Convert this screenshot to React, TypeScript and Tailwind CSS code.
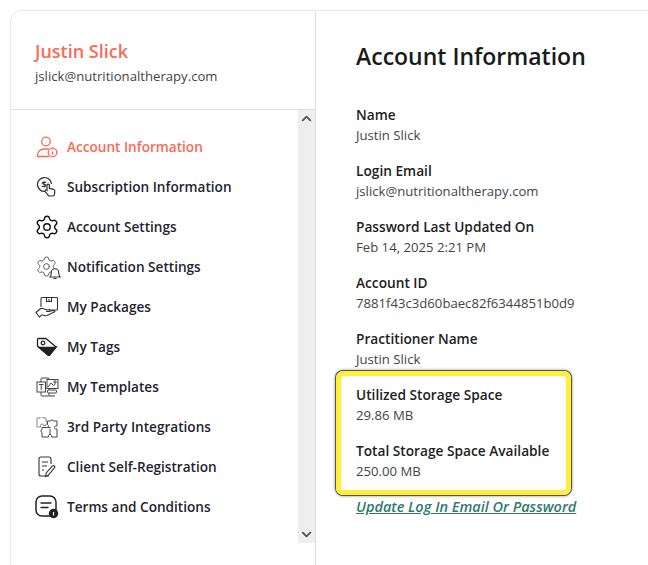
import { ReactNode } from 'react';
import { ChevronDown, ChevronUp, Settings } from 'lucide-react';

const font = { fontFamily: '"Open Sans", "Noto Sans", sans-serif' };

function AccountIcon() {
  return (
    <svg width="22" height="22" viewBox="0 0 22 22" fill="none" stroke="#fb6a55" strokeWidth="1.3">
      <circle cx="10" cy="5.5" r="4.3" />
      <path d="M1.5 20.5v-1.5c0-3.5 3-6 6.5-6h4" strokeLinecap="round" />
      <path d="M1.5 20.5h11" strokeLinecap="round" />
      <circle cx="16.5" cy="16.5" r="4.3" />
      <path d="M16.5 15.8v3M16.5 13.8v.8" strokeWidth="1.5" />
    </svg>
  );
}

function SubscriptionIcon() {
  return (
    <svg width="20" height="22" viewBox="0 0 20 22" fill="none" stroke="#2b2b2b" strokeWidth="1.2">
      <path d="M8 15.5a7 7 0 1 1 6.5-7.5" />
      <text x="4.6" y="11.5" fontSize="9" fontWeight="700" fill="#2b2b2b" stroke="none" fontFamily="Open Sans">$</text>
      <path d="M10 12V9.3a1.2 1.2 0 0 1 2.4 0v3l4 1c1 .3 1.5 1 1.4 2l-.4 3.5c-.1.8-.7 1.2-1.4 1.2h-3.4c-.6 0-1-.2-1.400-.7l-3-3.800c-.8-1.200.8-2.300 1.800-1.300z" fill="#fff" />
    </svg>
  );
}

function NotificationIcon() {
  return (
    <span className="relative block h-[24px] w-[24px]">
      <Settings size={23} strokeWidth={1} color="#555" />
      <svg className="absolute right-[-2px] bottom-[-1px]" width="12" height="14" viewBox="0 0 12 14" fill="#fff" stroke="#333" strokeWidth="1.1">
        <path d="M1 11c1-1 1.300-2 1.300-4.500a3.700 3.700 0 0 1 7.400 0c0 2.500.3 3.500 1.300 4.500z" />
        <path d="M4.500 12.500h3" />
      </svg>
    </span>
  );
}

function PackagesIcon() {
  return (
    <svg width="24" height="22" viewBox="0 0 24 22" fill="none" stroke="#333" strokeWidth="1.1">
      <path d="M6 11V2.500c0-.6.400-1 1-1h14.500c.6 0 1 .4 1 1V13c0 .6-.4 1-1 1H14" />
      <path d="M11.500 1.500v4h5v-4M13 4h2" />
      <path d="M1 16.500l4-3.500c1-.8 2-.8 3-.4l3 1.200h3.500c1 0 1 1.700 0 1.700H11l5-.5 3-.5c1 0 1.200 1 .4 1.400L12 19.500c-1 .3-2 .3-3-.1l-2-.6-2.500 2.200z" fill="#fff" />
    </svg>
  );
}

function TagsIcon() {
  return (
    <svg width="22" height="20" viewBox="0 0 22 20" fill="none" stroke="#222" strokeWidth="1.3">
      <path d="M2.500 1.500h7.500l10 8.500-6.500 8c-.5.500-1 .500-1.500 0L1.500 9V2.500c0-.6.400-1 1-1z" strokeLinejoin="round" />
      <path d="M3 10.500h15.500l1.500 -.500-6.500 8c-.5.500-1 .500-1.500 0z" fill="#222" />
      <circle cx="7" cy="6" r="1.800" />
    </svg>
  );
}

function TemplatesIcon() {
  return (
    <svg width="23" height="21" viewBox="0 0 23 21" fill="none" stroke="#444" strokeWidth="1">
      <rect x="5" y="1" width="8" height="18" rx="1" />
      <rect x="1" y="5" width="8.500" height="10" fill="#fff" />
      <path d="M3 7.500h4.500M5.200 7.500v5.500" />
      <rect x="11" y="2.500" width="11" height="9" fill="#fff" />
      <path d="M12 10l3-4 2.500 2.500 2-1.500" />
      <circle cx="19" cy="5" r="1.200" />
      <rect x="11.500" y="13" width="9" height="3" rx="1" fill="#fff" />
      <path d="M13 19h6" />
    </svg>
  );
}

function IntegrationsIcon() {
  return (
    <svg width="22" height="21" viewBox="0 0 22 21" fill="none" stroke="#444" strokeWidth="1">
      <path d="M1 1h3a1.500 1.500 0 0 1 3 0h3v3a1.500 1.500 0 0 1 0 3v1.500H7.500a1.500 1.500 0 0 0-3 0V10H1z" stroke="#888" />
      <path d="M11.500 4h3a1.600 1.600 0 0 1 3 0H21v5h-1.500a1.600 1.600 0 0 0 0 3H21v8h-5.500v-1.500a1.600 1.600 0 0 0-3 0V20H6v-4.500a1.600 1.600 0 0 1 0-3V10.500h4a1.600 1.600 0 0 0 1.500-3z" fill="#fff" />
      <path d="M11.500 10.500h3M14 12v6" />
    </svg>
  );
}

function SelfRegistrationIcon() {
  return (
    <svg width="18" height="22" viewBox="0 0 18 22" fill="none" stroke="#333" strokeWidth="1.1">
      <path d="M11 20H3c-1.200 0-2-.8-2-2V3c0-1.200.8-2 2-2h8c1.200 0 2 .8 2 2v5" />
      <path d="M4 6h6M4 10h5M4 14h2" />
      <path d="M7.500 20.500l.8-3.800L14.500 10c.6-.6 1.300-.6 1.900 0s.6 1.300 0 1.900l-6.200 7.400z" fill="#fff" />
    </svg>
  );
}

function TermsIcon() {
  return (
    <svg width="24" height="24" viewBox="0 0 24 24" fill="none" stroke="#222" strokeWidth="1.500">
      <rect x="1" y="1" width="20" height="20" rx="6" />
      <path d="M5.500 8h11M5.500 12.500h8" />
      <circle cx="18.500" cy="18.500" r="4" fill="#222" />
      <path d="M18.500 17v3.500" stroke="#fff" strokeWidth="1.200" />
    </svg>
  );
}

const menu: { label: string; icon: ReactNode; active?: boolean }[] = [
  { label: 'Account Information', icon: <AccountIcon />, active: true },
  { label: 'Subscription Information', icon: <SubscriptionIcon /> },
  { label: 'Account Settings', icon: <Settings size={26} strokeWidth={1.3} color="#111" /> },
  { label: 'Notification Settings', icon: <NotificationIcon /> },
  { label: 'My Packages', icon: <PackagesIcon /> },
  { label: 'My Tags', icon: <TagsIcon /> },
  { label: 'My Templates', icon: <TemplatesIcon /> },
  { label: '3rd Party Integrations', icon: <IntegrationsIcon /> },
  { label: 'Client Self-Registration', icon: <SelfRegistrationIcon /> },
  { label: 'Terms and Conditions', icon: <TermsIcon /> },
];

function Field({ label, value, className = 'h-[56px]' }: { label: string; value: string; className?: string }) {
  return (
    <div className={className}>
      <p className="text-[13.7px] leading-[20px] font-semibold text-[#222]">{label}</p>
      <p className="text-[13.15px] leading-[20px] text-[#444]">{value}</p>
    </div>
  );
}

export default function App() {
  return (
    <div className="h-[565px] w-[648px] overflow-hidden bg-white pl-[10px] pt-[10px]" style={font}>
      <div className="flex h-[555px] rounded-tl-[12px] border-l border-t border-[#e8e8e8]">
        {/* Sidebar */}
        <div className="flex w-[305px] shrink-0 flex-col border-r border-[#dedede]">
          <div className="h-[99px] shrink-0 border-b border-[#dedede] pl-[24px] pt-[28px]">
            <h2 className="text-[18px] leading-[24px] font-semibold text-[#fb6a55]">Justin Slick</h2>
            <p className="mt-[3px] text-[13.15px] leading-[20px] text-[#444]">jslick@nutritionaltherapy.com</p>
          </div>
          <div className="flex h-[433px] shrink-0">
            <ul className="flex-1 pt-[17px]">
              {menu.map((item) => (
                <li key={item.label} className="flex h-[40px] items-center">
                  <span className="flex w-[56px] shrink-0 justify-center pl-[18px] pr-[2px]">{item.icon}</span>
                  <span
                    className={`text-[13.6px] font-semibold ${item.active ? 'text-[#fb6a55]' : 'text-[#1f2430]'}`}
                  >
                    {item.label}
                  </span>
                </li>
              ))}
            </ul>
            <div className="flex w-[17px] shrink-0 flex-col items-center justify-between bg-[#eeeeee] py-[1px]">
              <ChevronUp size={15} strokeWidth={3} color="#555" />
              <ChevronDown size={15} strokeWidth={3} color="#555" />
            </div>
          </div>
        </div>

        {/* Content */}
        <div className="flex-1 pl-[40px] pt-[27px]">
          <h1 className="text-[23px] leading-[36px] font-semibold text-[#1a1a1a]">Account Information</h1>
          <div className="mt-[31px]">
            <Field label="Name" value="Justin Slick" />
            <Field label="Login Email" value="jslick@nutritionaltherapy.com" />
            <Field label="Password Last Updated On" value="Feb 14, 2025 2:21 PM" />
            <Field label="Account ID" value="7881f43c3d60baec82f6344851b0d9" />
            <Field label="Practitioner Name" value="Justin Slick" className="h-[42px]" />
          </div>
          <div className="-ml-[20px] h-[124px] w-[235px] rounded-[7px] border-[5px] border-[#fef03a] pl-[15px] pt-[9px] shadow-[0_0_0_1px_#555,0_0_3px_1px_#888]">
            <Field label="Utilized Storage Space" value="29.86 MB" />
            <Field label="Total Storage Space Available" value="250.00 MB" className="" />
          </div>
          <a className="mt-[2px] block text-[14.5px] leading-[20px] font-semibold italic text-[#2f7a6b] underline">
            Update Log In Email Or Password
          </a>
        </div>
      </div>
    </div>
  );
}
